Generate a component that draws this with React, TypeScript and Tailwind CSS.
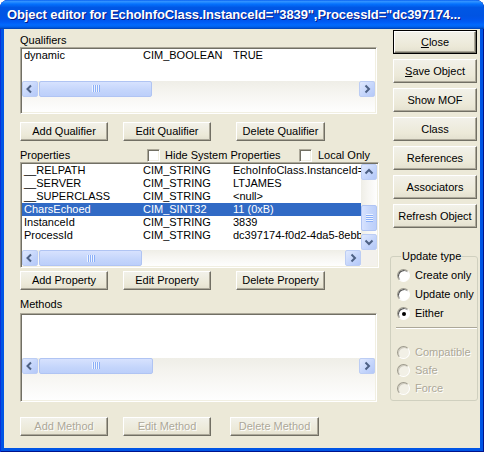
import React from "react";

type Dir = "left" | "right" | "up" | "down";

const chevrons: Record<Dir, string> = {
  left: "8,3.5 4.5,7 8,10.5",
  right: "5.5,3.5 9,7 5.5,10.5",
  up: "3.5,8.5 7,5 10.5,8.5",
  down: "3.5,5.5 7,9 10.5,5.5",
};

function ArrowBtn({ dir }: { dir: Dir }) {
  return (
    <div className="w-[16px] h-[16px] shrink-0 rounded-[2px] border border-[#bccdf4] bg-[linear-gradient(135deg,#e0e9fe,#c3d4fb_60%,#b4c8f8)]">
      <svg width="14" height="14" viewBox="0 0 14 14" className="block">
        <polyline points={chevrons[dir]} fill="none" stroke="#4d6185" strokeWidth="2" />
      </svg>
    </div>
  );
}

function Grip({ vertical }: { vertical?: boolean }) {
  const line = vertical
    ? "h-[2px] w-[7px] border-t border-t-[#eef3fe] border-b border-b-[#8cb0f8]"
    : "w-[2px] h-[7px] border-l border-l-[#eef3fe] border-r border-r-[#8cb0f8]";
  return (
    <div className={vertical ? "flex flex-col" : "flex"}>
      <span className={line} />
      <span className={line} />
      <span className={line} />
      <span className={line} />
    </div>
  );
}

function HScroll({ thumb }: { thumb: string }) {
  return (
    <div className="flex h-[16px] flex-1 bg-[linear-gradient(to_bottom,#efeee7,#f6f5f1_40%,#fefefe)]">
      <ArrowBtn dir="left" />
      <div
        className={`${thumb} ml-[1px] h-[16px] rounded-[2px] border border-[#b0c4f3] bg-[linear-gradient(to_bottom,#d7e2fe,#c4d5fb_60%,#bccffa)] flex items-center justify-center`}
      >
        <Grip />
      </div>
      <div className="flex-1" />
      <ArrowBtn dir="right" />
    </div>
  );
}

function VScroll() {
  return (
    <div className="flex w-[16px] flex-col bg-[linear-gradient(to_right,#efeee7,#f6f5f1_40%,#fefefe)]">
      <ArrowBtn dir="up" />
      <div className="mt-[25px] h-[26px] w-[16px] rounded-[2px] border border-[#b0c4f3] bg-[linear-gradient(to_right,#d7e2fe,#c4d5fb_60%,#bccffa)] flex items-center justify-center">
        <Grip vertical />
      </div>
      <div className="flex-1" />
      <ArrowBtn dir="down" />
    </div>
  );
}

const sunken =
  "border border-t-[#aca899] border-l-[#aca899] border-r-white border-b-white p-[1px] shadow-[inset_1px_1px_0_#716f64,inset_-1px_-1px_0_#f1efe2] bg-white";

function Row({ cells, selected }: { cells: string[]; selected?: boolean }) {
  return (
    <div
      className={`flex h-[13px] leading-[13px] whitespace-nowrap pl-[2px] ${
        selected ? "bg-[#316ac5] text-white" : "text-black"
      }`}
    >
      <span className="w-[119px] shrink-0">{cells[0]}</span>
      <span className="w-[90px] shrink-0">{cells[1]}</span>
      <span className="min-w-0 flex-1 overflow-hidden">{cells[2]}</span>
    </div>
  );
}

function Btn({
  children,
  w,
  disabled,
  isDefault,
}: {
  children: React.ReactNode;
  w: string;
  disabled?: boolean;
  isDefault?: boolean;
}) {
  const face = (
    <div
      className={`flex h-full w-full items-center justify-center border border-t-white border-l-white border-r-[#716f64] border-b-[#716f64] shadow-[inset_-1px_-1px_0_#aca899] bg-[linear-gradient(to_bottom,#f2f1e9,#ece9d8_70%,#e3e0cf)] ${
        disabled ? "text-[#aca899] [text-shadow:1px_1px_0_#fff]" : "text-black"
      }`}
    >
      {children}
    </div>
  );
  if (isDefault) {
    return <div className={`${w} border border-black`}>{face}</div>;
  }
  return <div className={w}>{face}</div>;
}

function Check({ label }: { label: string }) {
  return (
    <div className="w-[13px] h-[13px] shrink-0 border border-t-[#aca899] border-l-[#aca899] border-r-white border-b-white bg-white shadow-[inset_1px_1px_0_#716f64,inset_-1px_-1px_0_#f1efe2]" aria-label={label} />
  );
}

function Radio({ label, checked, disabled, h }: { label: string; checked?: boolean; disabled?: boolean; h: string }) {
  return (
    <div className={`flex items-center ${h}`}>
      <div
        className={`w-[13px] h-[13px] shrink-0 rounded-full border border-t-[#9d9a8d] border-l-[#9d9a8d] border-r-white border-b-white flex items-center justify-center ${
          disabled
            ? "bg-[#f2f0e6] shadow-[inset_1px_1px_0_#cfccc0]"
            : "bg-white shadow-[inset_1px_1px_0_#555]"
        }`}
      >
        {checked && <span className="w-[4px] h-[4px] rounded-full bg-black" />}
      </div>
      <span
        className={`ml-[5px] ${disabled ? "text-[#aca899] [text-shadow:1px_1px_0_#fff]" : "text-black"}`}
      >
        {label}
      </span>
    </div>
  );
}

const props = [
  ["__RELPATH", "CIM_STRING", "EchoInfoClass.InstanceId="],
  ["__SERVER", "CIM_STRING", "LTJAMES"],
  ["__SUPERCLASS", "CIM_STRING", "<null>"],
  ["CharsEchoed", "CIM_SINT32", "11 (0xB)"],
  ["InstanceId", "CIM_STRING", "3839"],
  ["ProcessId", "CIM_STRING", "dc397174-f0d2-4da5-8ebb-"],
];

export default function App() {
  return (
    <div className="w-[484px] h-[452px] bg-white font-['Liberation_Sans',Arial,sans-serif] text-[11px]">
      <div className="flex h-full w-full flex-col overflow-hidden rounded-t-[8px] bg-[#0055e5] shadow-[inset_1px_0_0_#0831d9,inset_-1px_0_0_#00138c,inset_0_-1px_0_#00138c]">
        {/* Title bar */}
        <div className="flex h-[29px] shrink-0 items-center pl-[7px] pt-[1px] bg-[linear-gradient(to_bottom,#0058ee_0%,#3593ff_4%,#288eff_7%,#127dff_11%,#036ffc_15%,#0262ee_21%,#0057e5_26%,#0054e3_55%,#0055eb_66%,#005bf5_76%,#026afe_86%,#0062ef_92%,#0052d6_96%,#0040ab_100%)]">
          <span className="whitespace-nowrap text-[13px] font-bold text-white tracking-[-0.1px] [text-shadow:1px_1px_0_#0a1883]">
            Object editor for EchoInfoClass.InstanceId="3839",ProcessId="dc397174...
          </span>
        </div>

        {/* Client area */}
        <div className="mx-[4px] mb-[4px] flex flex-1 bg-[#ece9d8]">
          {/* Left column */}
          <div className="ml-[16px] flex w-[359px] flex-col">
            <div className="mt-[4px] h-[14px] leading-[14px]">Qualifiers</div>
            <div className={`${sunken} flex h-[67px] w-[357px] flex-col`}>
              <div className="flex-1 overflow-hidden">
                <Row cells={["dynamic", "CIM_BOOLEAN", "TRUE"]} />
              </div>
              <HScroll thumb="w-[113px]" />
            </div>

            <div className="mt-[8px] flex h-[19px]">
              <Btn w="w-[88px]">Add Qualifier</Btn>
              <div className="w-[15px]" />
              <Btn w="w-[88px]">Edit Qualifier</Btn>
              <div className="w-[25px]" />
              <Btn w="w-[89px]">Delete Qualifier</Btn>
            </div>

            <div className="mt-[7px] flex h-[14px] items-center leading-[14px]">
              <span className="w-[127px]">Properties</span>
              <Check label="Hide System Properties" />
              <span className="ml-[5px] w-[134px]">Hide System Properties</span>
              <Check label="Local Only" />
              <span className="ml-[6px]">Local Only</span>
            </div>
            <div className={`${sunken} flex h-[106px] w-[359px] flex-col`}>
              <div className="flex min-h-0 flex-1">
                <div className="min-w-0 flex-1 overflow-hidden">
                  {props.map((p, i) => (
                    <Row key={p[0]} cells={p} selected={i === 3} />
                  ))}
                </div>
                <VScroll />
              </div>
              <div className="flex">
                <HScroll thumb="w-[103px]" />
                <div className="h-[16px] w-[16px] bg-[#f3f1ec]" />
              </div>
            </div>

            <div className="mt-[3px] flex h-[19px]">
              <Btn w="w-[88px]">Add Property</Btn>
              <div className="w-[15px]" />
              <Btn w="w-[88px]">Edit Property</Btn>
              <div className="w-[25px]" />
              <Btn w="w-[89px]">Delete Property</Btn>
            </div>

            <div className="mt-[7px] h-[14px] leading-[14px]">Methods</div>
            <div className={`${sunken} mt-[2px] flex h-[89px] w-[357px] flex-col`}>
              <div className="flex-1" />
              <HScroll thumb="w-[114px]" />
            </div>

            <div className="mt-[15px] flex h-[19px]">
              <Btn w="w-[88px]" disabled>Add Method</Btn>
              <div className="w-[15px]" />
              <Btn w="w-[88px]" disabled>Edit Method</Btn>
              <div className="w-[19px]" />
              <Btn w="w-[89px]" disabled>Delete Method</Btn>
            </div>
          </div>

          {/* Right column */}
          <div className="ml-[11px] flex w-[88px] flex-col">
            <div className="mt-[1px] flex flex-col gap-[5px] pl-[3px]">
              <div className="h-[24px] flex">
                <Btn w="w-[84px]" isDefault>
                  <span><span className="underline">C</span>lose</span>
                </Btn>
              </div>
              <div className="h-[24px] flex">
                <Btn w="w-[84px]">
                  <span><span className="underline">S</span>ave Object</span>
                </Btn>
              </div>
              <div className="h-[24px] flex"><Btn w="w-[84px]">Show MOF</Btn></div>
              <div className="h-[24px] flex"><Btn w="w-[84px]">Class</Btn></div>
              <div className="h-[24px] flex"><Btn w="w-[84px]">References</Btn></div>
              <div className="h-[24px] flex"><Btn w="w-[84px]">Associators</Btn></div>
              <div className="h-[24px] flex"><Btn w="w-[84px]">Refresh Object</Btn></div>
            </div>

            <fieldset className="mt-[22px] rounded-[3px] border border-[#d0d0bf] pl-[6px] pb-[3px]">
              <legend className="ml-[4px] px-[1px] leading-[13px]">Update type</legend>
              <div className="mt-[3px]">
                <Radio label="Create only" h="h-[19px]" />
                <Radio label="Update only" h="h-[19px]" />
                <Radio label="Either" checked h="h-[19px]" />
              </div>
              <div className="mt-[4px] ml-[-1px] border-t border-t-[#aca899] border-b border-b-white" />
              <div className="mt-[14px]">
                <Radio label="Compatible" disabled h="h-[18px]" />
                <Radio label="Safe" disabled h="h-[18px]" />
                <Radio label="Force" disabled h="h-[18px]" />
              </div>
            </fieldset>
          </div>
        </div>
      </div>
    </div>
  );
}
